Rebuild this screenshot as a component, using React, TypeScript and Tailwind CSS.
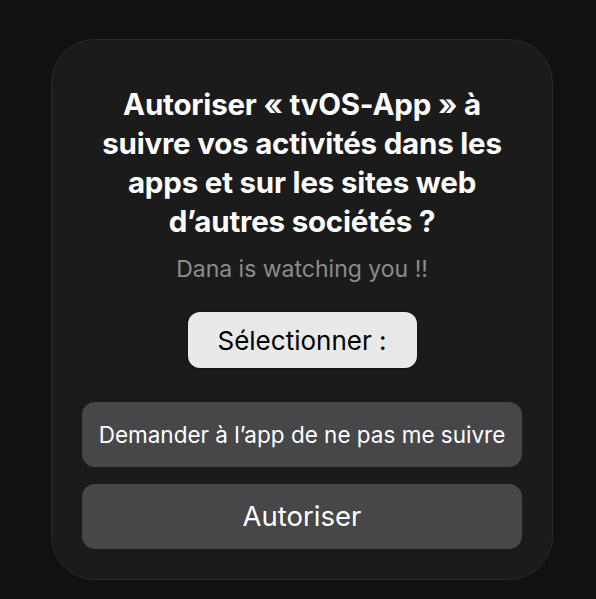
export default function App() {
  return (
    <div
      className="flex h-[599px] w-full bg-[#111111] pl-[51px] pt-[39px]"
      style={{ fontFamily: "Inter, 'Noto Sans', sans-serif" }}
    >
      <div className="flex h-[541px] w-[502px] flex-col items-center rounded-[44px] border border-[#2a2a2a] bg-[#1b1b1c] px-[30px] pt-[45px]">
        <h1 className="whitespace-nowrap text-center text-[29.5px] font-bold leading-[39px] tracking-[-0.2px] text-white">
          Autoriser « tvOS-App » à
          <br />
          suivre vos activités dans les
          <br />
          apps et sur les sites web
          <br />
          d’autres sociétés ?
        </h1>
        <p className="mt-[14px] text-[23px] leading-[28px] text-[#8b8b8b]">
          Dana is watching you !!
        </p>
        <button className="mt-[29px] flex h-[56px] w-[229px] items-center justify-center rounded-[12px] bg-[#e9e9e9] text-[26px] text-black shadow-[0_1px_3px_rgba(0,0,0,0.5)]">
          Sélectionner :
        </button>
        <div className="mt-[34px] flex w-full flex-col gap-[17px]">
          <button className="flex h-[65px] w-full items-center justify-center whitespace-nowrap rounded-[13px] bg-[#47474a] text-[22.5px] text-white">
            Demander à l’app de ne pas me suivre
          </button>
          <button className="flex h-[65px] w-full items-center justify-center rounded-[13px] bg-[#47474a] text-[27.5px] text-white">
            Autoriser
          </button>
        </div>
      </div>
    </div>
  );
}
